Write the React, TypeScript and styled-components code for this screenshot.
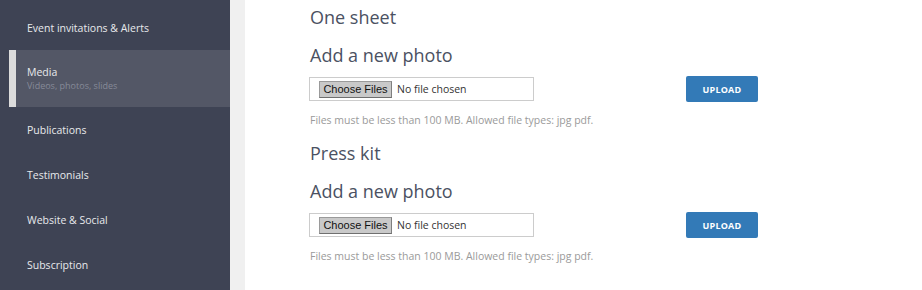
import React from 'react';
import styled, { createGlobalStyle } from 'styled-components';

const GlobalStyle = createGlobalStyle`
  html, body {
    margin: 0;
    padding: 0;
    background: #ffffff;
  }
  body {
    font-family: "Open Sans", "Liberation Sans", sans-serif;
    -webkit-font-smoothing: antialiased;
  }
`;

const Page = styled.div`
  display: flex;
  width: 922px;
  height: 290px;
  overflow: hidden;
`;

const Sidebar = styled.nav`
  width: 230px;
  flex: none;
  background: #3e4354;
  padding-top: 5px;
  box-sizing: border-box;
`;

const Gutter = styled.div`
  width: 15px;
  flex: none;
  background: #f0f0f0;
`;

type NavItemProps = {
  active?: boolean;
}

const NavItem = styled.div<NavItemProps>`
  display: flex;
  flex-direction: column;
  justify-content: center;
  height: ${props => props.active ? '57px' : '45px'};
  margin-left: 9px;
  padding-left: ${props => props.active ? '11px' : '18px'};
  border-left: ${props => props.active ? '7px solid #dcdcdc' : 'none'};
  background: ${props => props.active ? '#535766' : 'transparent'};
  cursor: pointer;
`;

const NavTitle = styled.div`
  font-size: 10.5px;
  line-height: 14px;
  color: #e8e9ec;
`;

const NavSub = styled.div`
  font-size: 9px;
  line-height: 13px;
  color: #868a98;
`;

const Content = styled.main`
  flex: 1;
  padding: 5px 0 0 65px;
`;

const Section = styled.section`
  margin-bottom: 14px;
`;

const Title = styled.h3`
  margin: 0 0 14px;
  font-size: 18px;
  line-height: 24px;
  font-weight: 400;
  color: #4b5162;
`;

const SubTitle = styled.h4`
  margin: 0 0 9px;
  font-size: 18px;
  line-height: 24px;
  font-weight: 400;
  color: #4b5162;
`;

const UploadRow = styled.div`
  display: flex;
  align-items: center;
  height: 26px;
  margin-left: -1px;
  margin-bottom: 11px;
`;

const FileBox = styled.label`
  display: flex;
  align-items: center;
  width: 225px;
  height: 24px;
  box-sizing: border-box;
  border: 1px solid #cccccc;
  padding-left: 9px;
  margin-right: 152px;
  background: #fff;
`;

const ChooseButton = styled.span`
  display: inline-flex;
  align-items: center;
  justify-content: center;
  width: 73px;
  height: 17px;
  box-sizing: border-box;
  background: #c9c9c9;
  border: 1px solid #9a9a9a;
  border-bottom-color: #6f6f6f;
  border-right-color: #7f7f7f;
  font-family: "Liberation Sans", Arial, sans-serif;
  font-size: 11px;
  color: #111;
`;

const FileName = styled.span`
  margin-left: 5px;
  font-size: 10.5px;
  color: #333;
`;

const UploadButton = styled.button`
  width: 72px;
  height: 26px;
  border: none;
  border-radius: 2px;
  background: #337ab7;
  color: #fff;
  font-family: "Open Sans", sans-serif;
  font-size: 9px;
  font-weight: 700;
  letter-spacing: 0.2px;
  cursor: pointer;
`;

const Help = styled.p`
  margin: 0;
  font-size: 10.5px;
  line-height: 14px;
  color: #9a9a9a;
`;

const navItems = [
  { title: 'Event invitations & Alerts' },
  { title: 'Media', sub: 'Videos, photos, slides', active: true },
  { title: 'Publications' },
  { title: 'Testimonials' },
  { title: 'Website & Social' },
  { title: 'Subscription' },
];

const sections = ['One sheet', 'Press kit'];

export default function App() {
  return (
    <Page>
      <GlobalStyle />
      <Sidebar>
        {navItems.map((item, index) => (
          <NavItem key={index} active={item.active}>
            <NavTitle>{item.title}</NavTitle>
            {item.sub && <NavSub>{item.sub}</NavSub>}
          </NavItem>
        ))}
      </Sidebar>
      <Gutter />
      <Content>
        {sections.map((name) => (
          <Section key={name}>
            <Title>{name}</Title>
            <SubTitle>Add a new photo</SubTitle>
            <UploadRow>
              <FileBox>
                <ChooseButton>Choose Files</ChooseButton>
                <FileName>No file chosen</FileName>
              </FileBox>
              <UploadButton>UPLOAD</UploadButton>
            </UploadRow>
            <Help>Files must be less than 100 MB. Allowed file types: jpg pdf.</Help>
          </Section>
        ))}
      </Content>
    </Page>
  );
}
